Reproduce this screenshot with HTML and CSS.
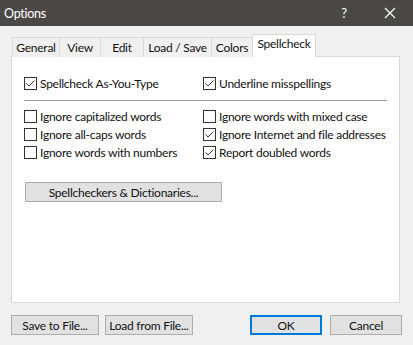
FILE: index.html
```html
<!DOCTYPE html>
<html lang="en">
<head>
    <meta charset="UTF-8">
    <title>Options</title>
    <link rel="stylesheet" href="styles.css">
</head>
<body>
    <div class="dialog">
        <div class="title-bar">
            <span class="title">Options</span>
            <span class="help-btn">?</span>
            <span class="close-btn">
                <svg width="12" height="12" viewBox="0 0 12 12"><path d="M1 1 L11 11 M11 1 L1 11" stroke="#fff" stroke-width="1.2" fill="none"/></svg>
            </span>
        </div>

        <div class="content">
            <div class="tabs">
                <div class="tab" style="width: 47px">General</div>
                <div class="tab" style="width: 41px">View</div>
                <div class="tab" style="width: 43px">Edit</div>
                <div class="tab" style="width: 68px">Load / Save</div>
                <div class="tab" style="width: 41px">Colors</div>
                <div class="tab active" style="width: 64px">Spellcheck</div>
            </div>

            <div class="panel">
                <div class="grid">
                    <label class="check"><span class="box checked"></span>Spellcheck As-You-Type</label>
                    <label class="check"><span class="box checked"></span>Underline misspellings</label>
                </div>
                <div class="separator"></div>
                <div class="grid">
                    <label class="check"><span class="box"></span>Ignore capitalized words</label>
                    <label class="check"><span class="box"></span>Ignore words with mixed case</label>
                    <label class="check"><span class="box"></span>Ignore all-caps words</label>
                    <label class="check"><span class="box checked"></span>Ignore Internet and file addresses</label>
                    <label class="check"><span class="box"></span>Ignore words with numbers</label>
                    <label class="check"><span class="box checked"></span>Report doubled words</label>
                </div>
                <button class="btn dict-btn">Spellcheckers &amp; Dictionaries...</button>
            </div>

            <div class="footer">
                <button class="btn file-btn">Save to File...</button>
                <button class="btn file-btn">Load from File...</button>
                <div class="spacer"></div>
                <button class="btn ok-btn">OK</button>
                <button class="btn cancel-btn">Cancel</button>
            </div>
        </div>
    </div>
</body>
</html>
```

FILE: styles.css
```css
body {
    margin: 0;
    padding: 0;
    font-family: Lato, "Noto Sans", sans-serif;
    font-size: 12px;
    letter-spacing: -0.25px;
    color: #111;
    background-color: #f0f0f0;
}

.dialog {
    width: 413px;
    height: 345px;
    background-color: #f0f0f0;
    overflow: hidden;
}

.title-bar {
    height: 26px;
    background-color: #4a4846;
    color: #fff;
    display: flex;
    align-items: center;
    padding-left: 4px;
}

.title {
    font-size: 12.5px;
    flex: 1;
}

.help-btn {
    width: 46px;
    text-align: center;
    font-size: 13px;
}

.close-btn {
    width: 46px;
    display: flex;
    justify-content: center;
    align-items: center;
}

.content {
    padding: 8px 11px 0 11px;
}

.tabs {
    display: flex;
    align-items: flex-end;
    padding-left: 1px;
    height: 23px;
    margin-bottom: -1px;
    position: relative;
    z-index: 1;
}

.tab {
    height: 20px;
    box-sizing: border-box;
    border: 1px solid #d9d9d9;
    border-bottom: none;
    border-right: none;
    background-color: #f0f0f0;
    text-align: center;
    line-height: 19px;
    white-space: nowrap;
}

.tab.active {
    height: 23px;
    background-color: #fff;
    border-right: 1px solid #d9d9d9;
    line-height: 18px;
    padding-bottom: 2px;
}

.panel {
    width: 389px;
    height: 247px;
    box-sizing: border-box;
    background-color: #fff;
    border: 1px solid #d9d9d9;
    padding: 18px 12px 0 12px;
}

.grid {
    display: grid;
    grid-template-columns: 179px 1fr;
    row-gap: 1px;
}

.check {
    display: flex;
    align-items: center;
    height: 17px;
    white-space: nowrap;
}

.box {
    width: 13px;
    height: 13px;
    box-sizing: border-box;
    border: 1px solid #333;
    background-color: #fff;
    margin-right: 3px;
    flex-shrink: 0;
}

.box.checked {
    background-image: url("data:image/svg+xml;utf8,<svg xmlns='http://www.w3.org/2000/svg' width='11' height='11' viewBox='0 0 11 11'><path d='M1.5 5.5 L4 8 L9.5 2.5' stroke='%23333' stroke-width='1' fill='none'/></svg>");
    background-repeat: no-repeat;
}

.separator {
    height: 1px;
    background-color: #a0a0a0;
    margin: 8px 0 7px 0;
}

.btn {
    font-family: inherit;
    font-size: 12px;
    letter-spacing: -0.25px;
    color: #111;
    background-color: #e1e1e1;
    border: 1px solid #adadad;
    padding: 0;
    height: 20px;
    box-sizing: border-box;
    white-space: nowrap;
}

.dict-btn {
    display: block;
    width: 197px;
    margin-top: 21px;
    margin-left: 1px;
}

.footer {
    display: flex;
    margin-top: 12px;
}

.file-btn {
    width: 88px;
    margin-right: 6px;
}

.spacer {
    flex: 1;
}

.ok-btn {
    width: 72px;
    border: 2px solid #0078d7;
    margin-right: 8px;
}

.cancel-btn {
    width: 72px;
}
```
